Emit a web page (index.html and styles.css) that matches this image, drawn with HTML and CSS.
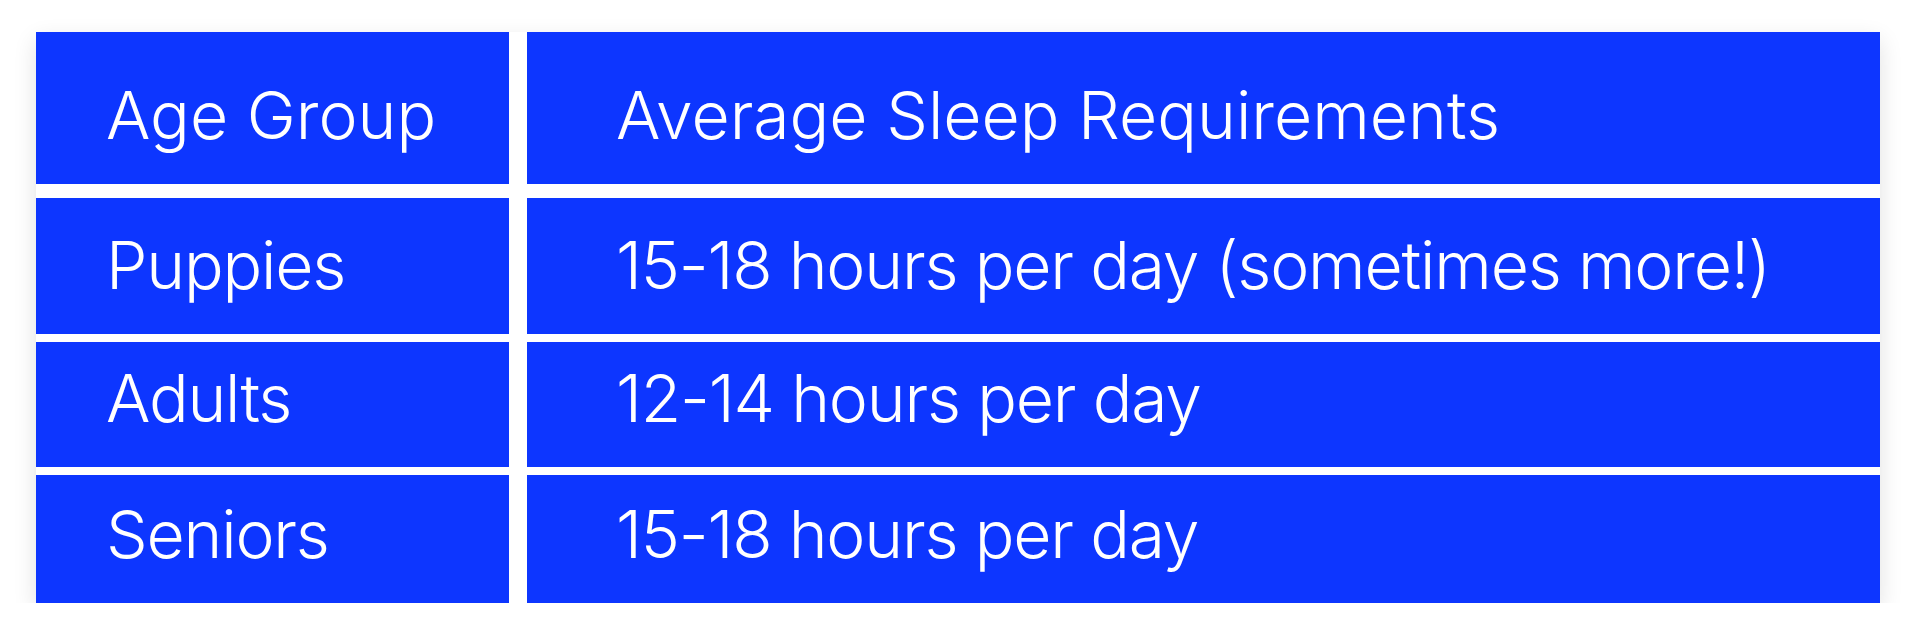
FILE: index.html
```html
<!DOCTYPE html>
<html lang="en">
<head>
<meta charset="utf-8">
<title>Dog Sleep Requirements</title>
<link rel="stylesheet" href="styles.css">
</head>
<body>
<div class="table">
  <div class="row row-head">
    <div class="cell c1">Age Group</div>
    <div class="cell c2">Average Sleep Requirements</div>
  </div>
  <div class="body">
    <div class="row row-a">
      <div class="cell c1">Puppies</div>
      <div class="cell c2">15-18 hours per day (sometimes more!)</div>
    </div>
    <div class="row row-b">
      <div class="cell c1">Adults</div>
      <div class="cell c2">12-14 hours per day</div>
    </div>
    <div class="row row-c">
      <div class="cell c1">Seniors</div>
      <div class="cell c2">15-18 hours per day</div>
    </div>
  </div>
</div>
</body>
</html>
```

FILE: styles.css
```css
html, body {
  margin: 0;
  padding: 0;
  background: #ffffff;
}
body {
  padding: 32px 38px 0 36px;
  font-family: "Inter", "Noto Sans", sans-serif;
  font-weight: 300;
  color: #ffffff;
}
.table {
  display: flex;
  flex-direction: column;
  gap: 14px;
  width: 1844px;
  box-shadow: 0 8px 22px rgba(0, 0, 0, 0.12);
}
.body {
  display: flex;
  flex-direction: column;
  gap: 8px;
}
.row {
  display: grid;
  grid-template-columns: 473px 1353px;
  column-gap: 18px;
}
.row-head { height: 152px; }
.row-a { height: 136px; }
.row-b { height: 125px; }
.row-c { height: 128px; }
.cell {
  background: #0d36ff;
  display: flex;
  align-items: flex-end;
  box-sizing: border-box;
  padding-bottom: 36px;
  font-size: 66px;
  line-height: 1;
  white-space: nowrap;
}
.body .cell { letter-spacing: -1.2px; }
.c1 { padding-left: 70px; }
.c2 { padding-left: 89px; }
```
